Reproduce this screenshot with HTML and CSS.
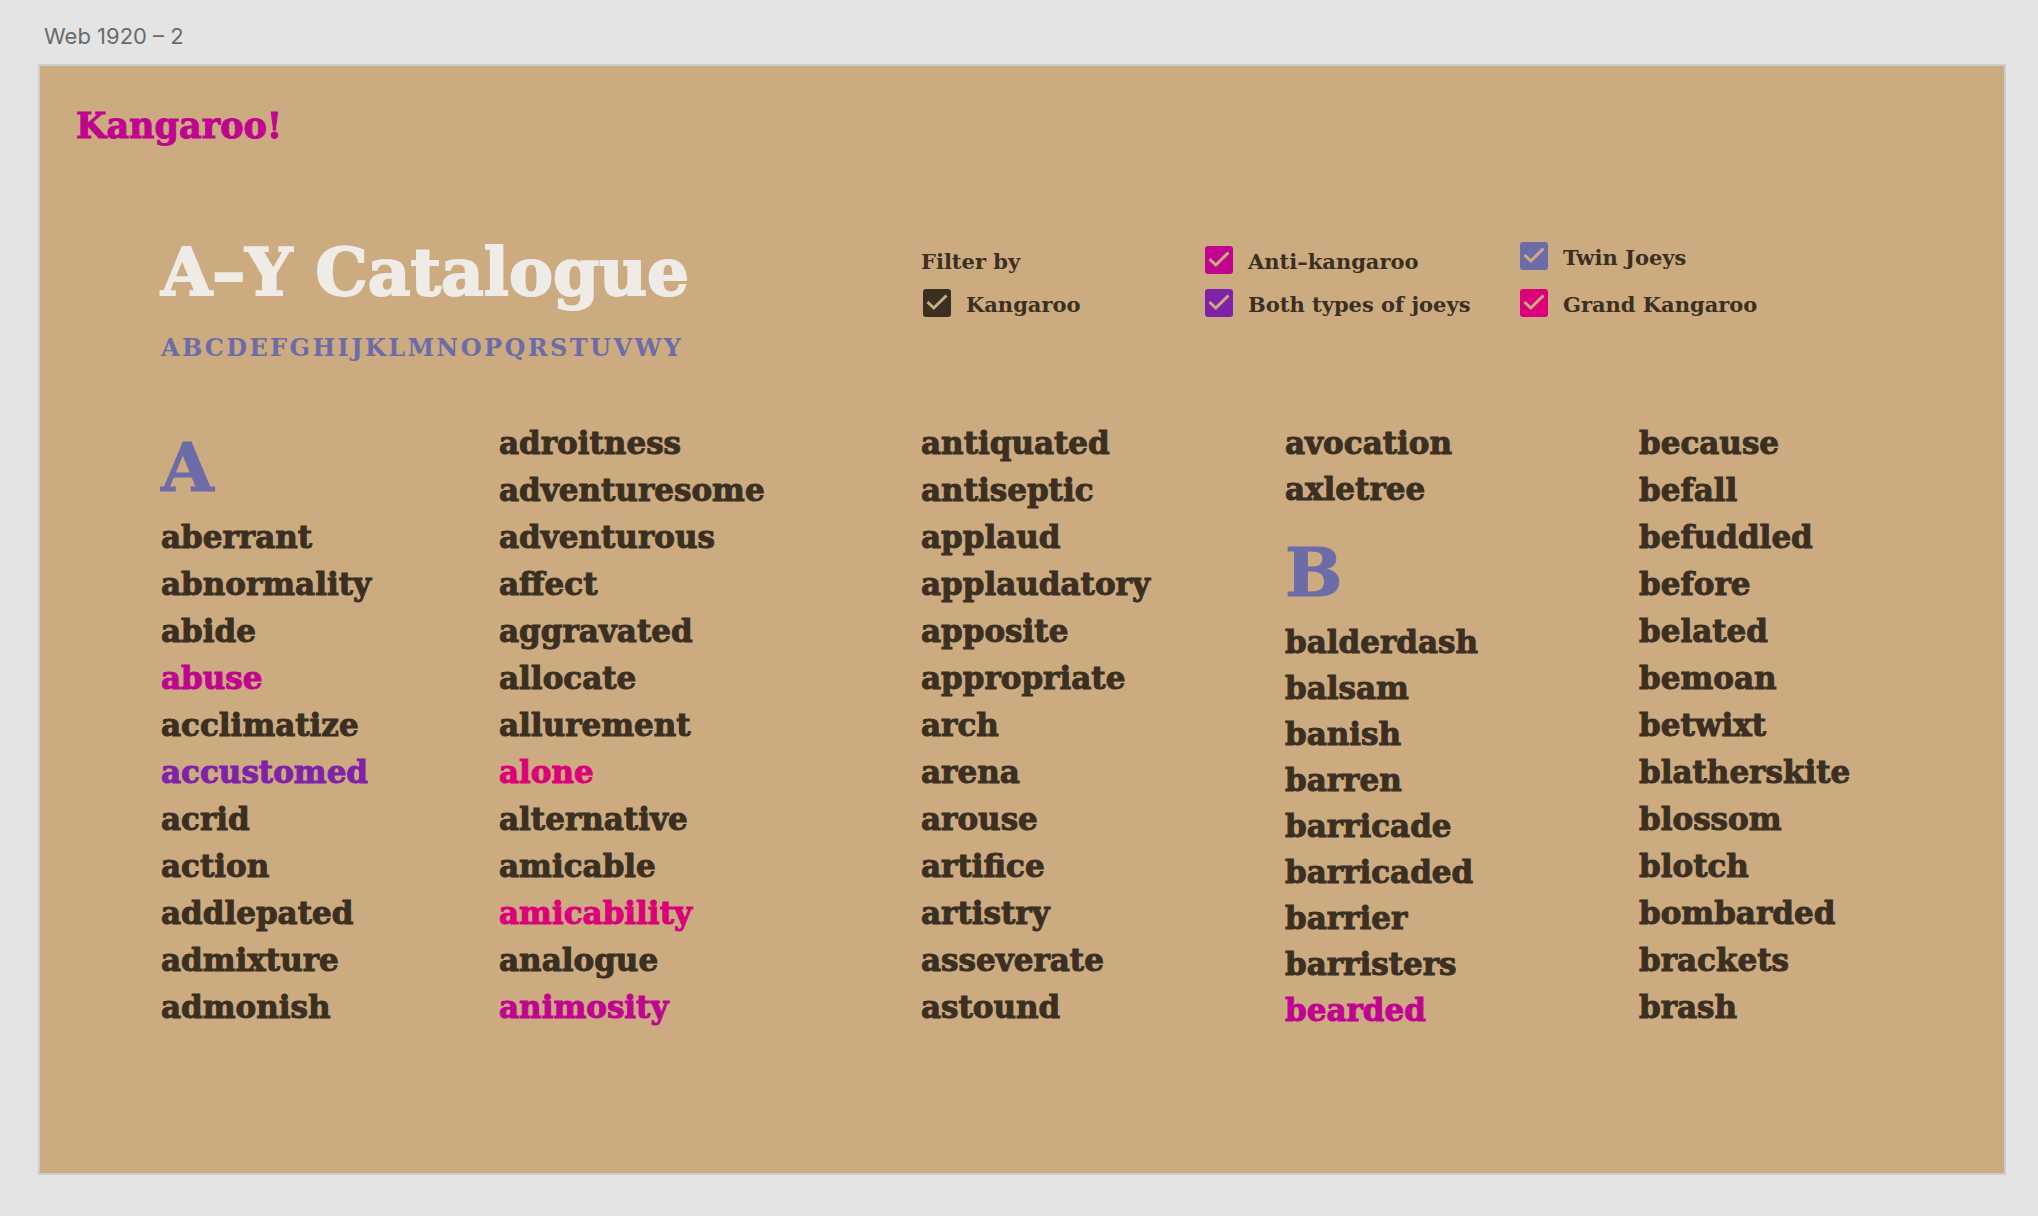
FILE: index.html
```html
<!DOCTYPE html>
<html lang="en">
<head>
<meta charset="utf-8">
<meta name="viewport" content="width=device-width, initial-scale=1">
<title>Kangaroo! A–Y Catalogue</title>
<link rel="stylesheet" href="styles.css">
</head>
<body>
<p class="board-label">Web 1920 – 2</p>
<main class="board">
  <header><a class="brand" href="#">Kangaroo!</a></header>

  <section class="intro">
    <div class="heading">
      <h1 class="title">A–Y Catalogue</h1>
      <nav class="alphabet" aria-label="Letters"><a href="#a">A</a><a href="#b">B</a><a href="#c">C</a><a href="#d">D</a><a href="#e">E</a><a href="#f">F</a><a href="#g">G</a><a href="#h">H</a><a href="#i">I</a><a href="#j">J</a><a href="#k">K</a><a href="#l">L</a><a href="#m">M</a><a href="#n">N</a><a href="#o">O</a><a href="#p">P</a><a href="#q">Q</a><a href="#r">R</a><a href="#s">S</a><a href="#t">T</a><a href="#u">U</a><a href="#v">V</a><a href="#w">W</a><a href="#y">Y</a></nav>
    </div>
    <form class="filters">
      <div class="filter-group">
        <p class="filter-title">Filter by</p>
        <label class="filter"><span class="tick"><input type="checkbox" checked><svg viewBox="0 0 28 28" aria-hidden="true"><path d="M4.500 13l6.300 6L23.500 6.500"/></svg></span>Kangaroo</label>
      </div>
      <div class="filter-group">
        <label class="filter anti"><span class="tick"><input type="checkbox" checked><svg viewBox="0 0 28 28" aria-hidden="true"><path d="M4.500 13l6.300 6L23.500 6.500"/></svg></span>Anti–kangaroo</label>
        <label class="filter both"><span class="tick"><input type="checkbox" checked><svg viewBox="0 0 28 28" aria-hidden="true"><path d="M4.500 13l6.300 6L23.500 6.500"/></svg></span>Both types of joeys</label>
      </div>
      <div class="filter-group loose">
        <label class="filter twin"><span class="tick"><input type="checkbox" checked><svg viewBox="0 0 28 28" aria-hidden="true"><path d="M4.500 13l6.300 6L23.500 6.500"/></svg></span>Twin Joeys</label>
        <label class="filter grand"><span class="tick"><input type="checkbox" checked><svg viewBox="0 0 28 28" aria-hidden="true"><path d="M4.500 13l6.300 6L23.500 6.500"/></svg></span>Grand Kangaroo</label>
      </div>
    </form>
  </section>

  <section class="catalogue">
    <div class="column">
      <h2 class="letter" id="a">A</h2>
      <ul class="words">
        <li>aberrant</li><li>abnormality</li><li>abide</li><li class="anti">abuse</li><li>acclimatize</li><li class="both">accustomed</li><li>acrid</li><li>action</li><li>addlepated</li><li>admixture</li><li>admonish</li>
      </ul>
    </div>
    <div class="column">
      <ul class="words">
        <li>adroitness</li><li>adventuresome</li><li>adventurous</li><li>affect</li><li>aggravated</li><li>allocate</li><li>allurement</li><li class="grand">alone</li><li>alternative</li><li>amicable</li><li class="grand">amicability</li><li>analogue</li><li class="anti">animosity</li>
      </ul>
    </div>
    <div class="column">
      <ul class="words">
        <li>antiquated</li><li>antiseptic</li><li>applaud</li><li>applaudatory</li><li>apposite</li><li>appropriate</li><li>arch</li><li>arena</li><li>arouse</li><li>artifice</li><li>artistry</li><li>asseverate</li><li>astound</li>
      </ul>
    </div>
    <div class="column tight">
      <ul class="words">
        <li>avocation</li><li>axletree</li>
      </ul>
      <h2 class="letter" id="b">B</h2>
      <ul class="words">
        <li>balderdash</li><li>balsam</li><li>banish</li><li>barren</li><li>barricade</li><li>barricaded</li><li>barrier</li><li>barristers</li><li class="anti">bearded</li>
      </ul>
    </div>
    <div class="column">
      <ul class="words">
        <li>because</li><li>befall</li><li>befuddled</li><li>before</li><li>belated</li><li>bemoan</li><li>betwixt</li><li>blatherskite</li><li>blossom</li><li>blotch</li><li>bombarded</li><li>brackets</li><li>brash</li>
      </ul>
    </div>
  </section>
</main>
</body>
</html>
```
FILE: styles.css
```css
:root {
  --sand: #ccab81;
  --ink: #3b2f22;
  --anti: #c0048f;
  --both: #7f22a8;
  --twin: #6c6ca8;
  --grand: #db007a;
}

* { box-sizing: border-box; margin: 0; padding: 0; }

body {
  padding: 20px 32px 42px 38px;
  background: #e4e4e4;
  color: var(--ink);
  font-family: "DejaVu Serif", serif;
  font-weight: 700;
}

a { color: inherit; text-decoration: none; }

.board-label {
  padding-left: 6px;
  margin-bottom: 12px;
  color: #6b6b6b;
  font: 400 22px/32px Inter, sans-serif;
}

.board {
  padding: 40px 0 140px;
  border: 2px solid #cdcdcd;
  background: var(--sand);
}

.brand {
  display: block;
  width: max-content;
  margin-left: 36px;
  color: var(--anti);
  font-size: 35px;
  line-height: 40px;
  -webkit-text-stroke: 1px;
}

.intro,
.catalogue {
  display: grid;
  padding-left: 121px;
}

.intro {
  grid-template-columns: 760fr 1083fr;
  margin-top: 86px;
}

.heading { width: max-content; }

.title {
  color: #efebe6;
  font-size: 66px;
  line-height: 80px;
  -webkit-text-stroke: 2px;
}

.alphabet {
  display: flex;
  justify-content: space-between;
  margin-top: 20px;
  padding-right: 8px;
  color: var(--twin);
  font-size: 24px;
  line-height: 32px;
}

.filters {
  display: grid;
  grid-template-columns: 284fr 315fr 484fr;
  align-items: end;
  align-self: start;
  padding-top: 10px;
  font-size: 21px;
  line-height: 32px;
}

.filter-group { display: grid; row-gap: 11px; }
.filter-group.loose { row-gap: 15px; }

.filter { display: flex; gap: 15px; width: max-content; color: var(--ink); }
.filter-title + .filter { padding-left: 2px; }

.tick { display: grid; width: 28px; height: 28px; }
.tick > * { grid-area: 1 / 1; width: 28px; height: 28px; }

.tick input {
  appearance: none;
  border-radius: 3px;
  background: var(--ink);
}

.tick svg {
  fill: none;
  stroke: var(--sand);
  stroke-width: 3;
  pointer-events: none;
}

.tick input:not(:checked) + svg { visibility: hidden; }

.filter.anti input { background: var(--anti); }
.filter.both input { background: var(--both); }
.filter.twin input { background: var(--twin); }
.filter.grand input { background: var(--grand); }

.catalogue {
  grid-template-columns: 338fr 422fr 364fr 354fr 365fr;
  margin-top: 56px;
  font-size: 31px;
  line-height: 47px;
}

.column.tight { line-height: 46px; }

.words { list-style: none; -webkit-text-stroke: 1px; }
.words + .letter { margin-top: 13px; }

.words .anti { color: var(--anti); }
.words .both { color: var(--both); }
.words .grand { color: var(--grand); }

.letter {
  color: var(--twin);
  font-size: 68px;
  line-height: 94px;
  -webkit-text-stroke: 1px;
}
```
